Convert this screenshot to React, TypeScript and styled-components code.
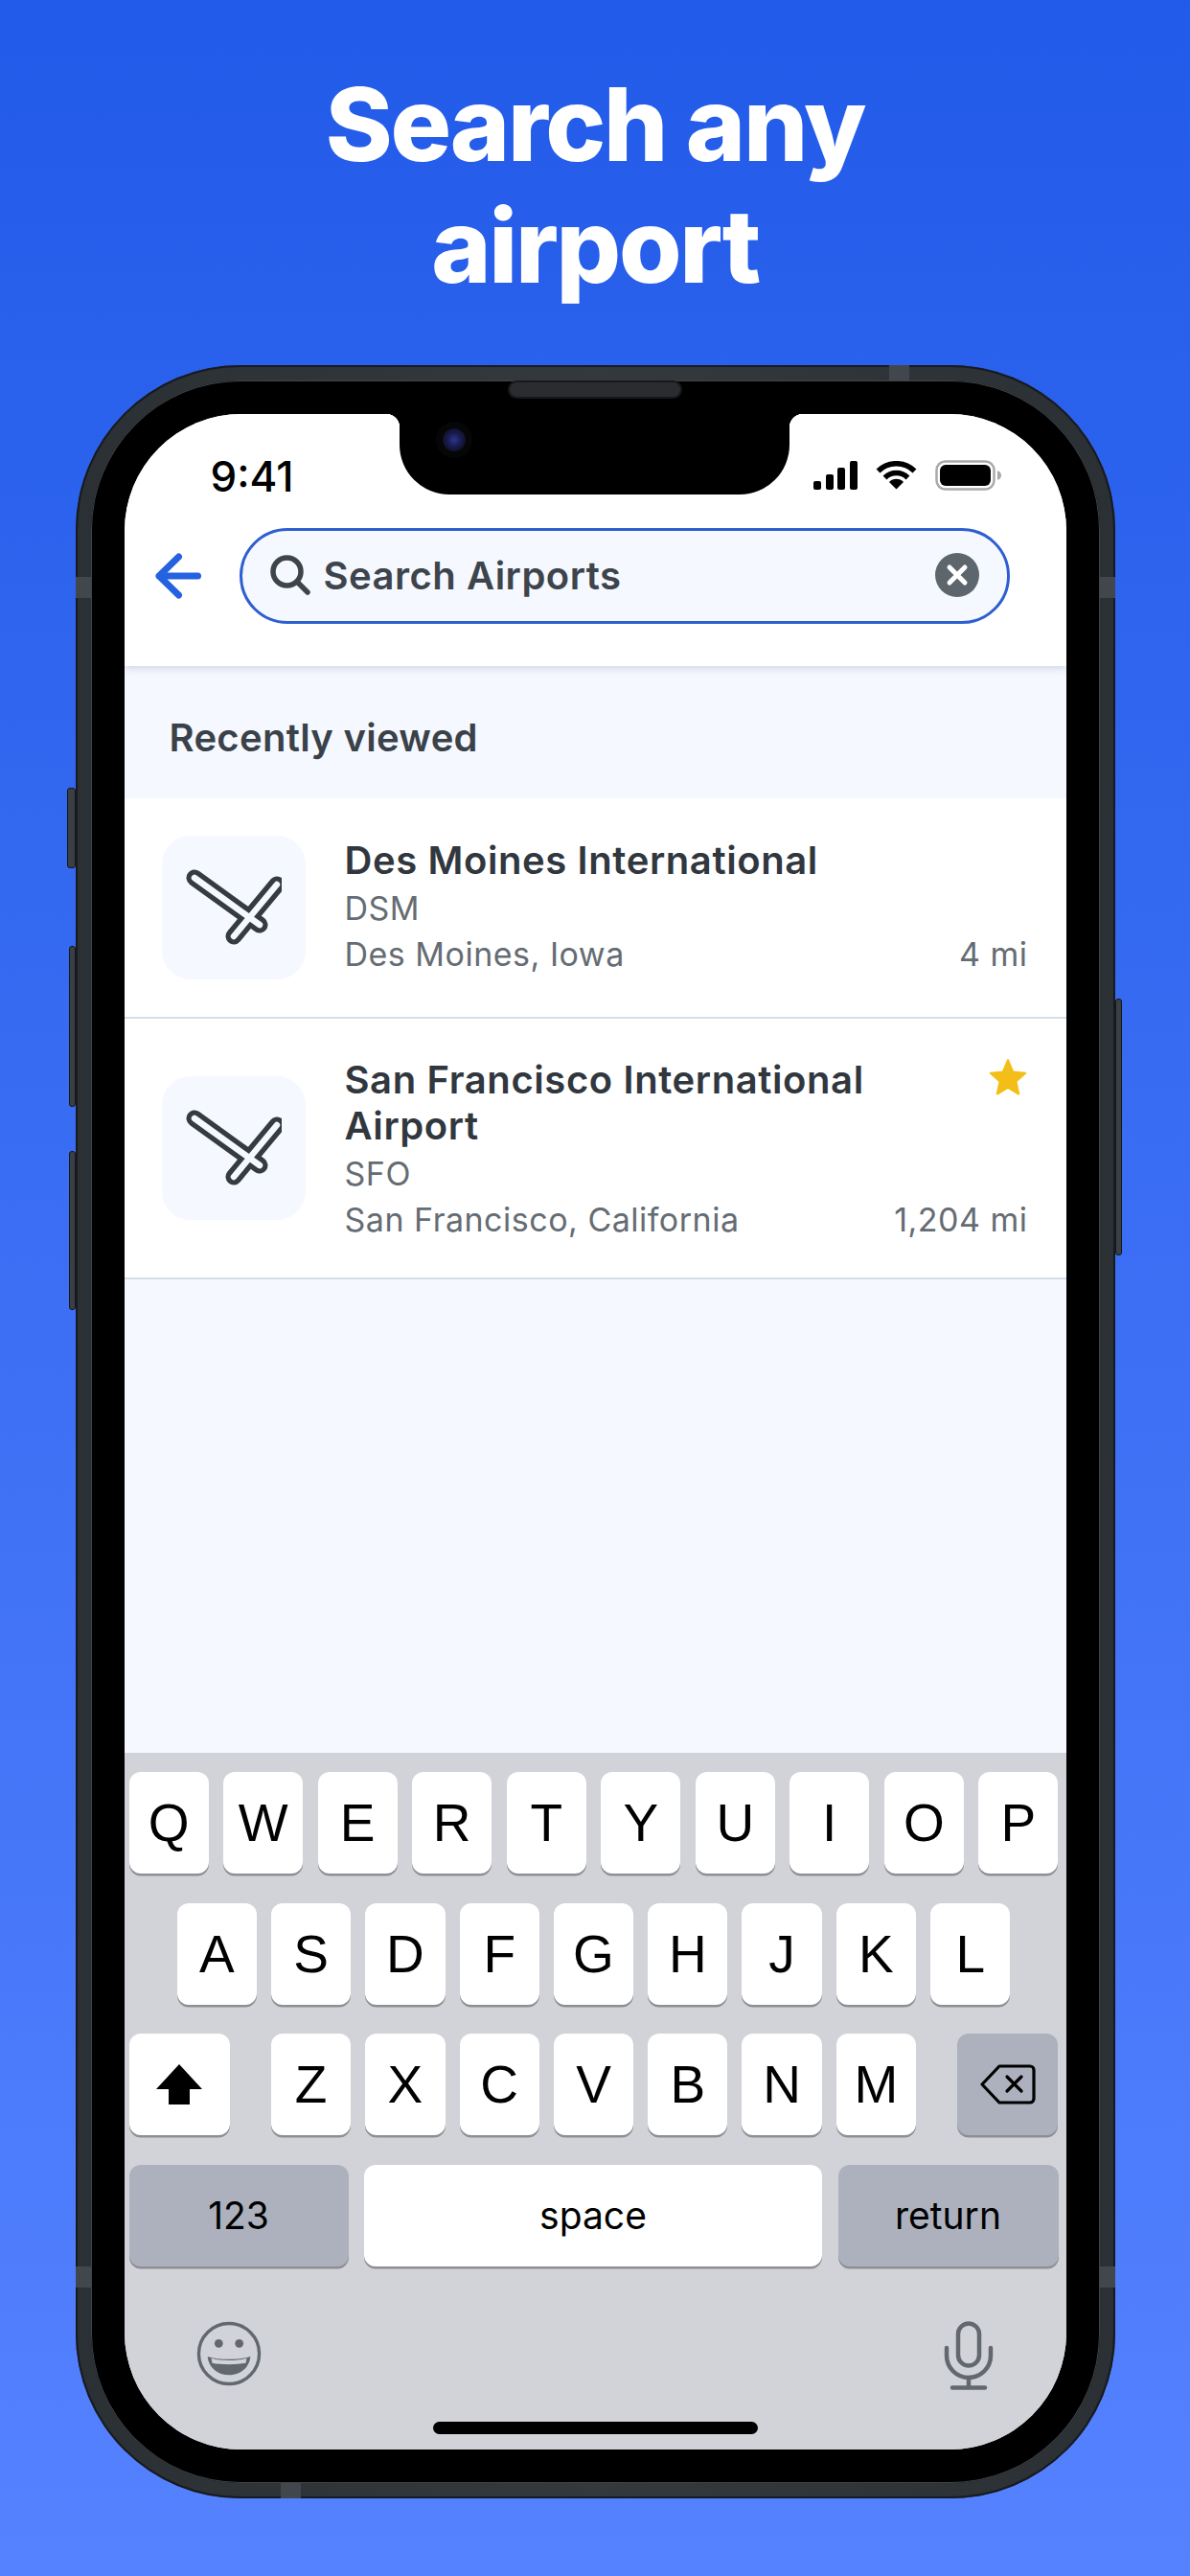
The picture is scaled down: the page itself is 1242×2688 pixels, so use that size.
import React from "react";
import styled, { createGlobalStyle } from "styled-components";

const GlobalStyle = createGlobalStyle`
    * { box-sizing: border-box; }
    html, body {
        margin: 0;
        padding: 0;
        width: 1242px;
        height: 2688px;
        overflow: hidden;
    }
`;

const Page = styled.div`
    width: 1242px;
    height: 2688px;
    background: linear-gradient(180deg, #225be9 0%, #5582ff 100%);
    display: flex;
    flex-direction: column;
    align-items: center;
    padding-top: 66px;
    font-family: Inter, "Liberation Sans", sans-serif;
`;

const Title = styled.h1`
    margin: 0 0 61px;
    color: #fff;
    font-size: 106px;
    line-height: 127px;
    font-weight: 800;
    letter-spacing: -2.3px;
    text-align: center;
`;

const Phone = styled.div`
    position: relative;
    width: 1085px;
    height: 2226px;
    padding: 16px;
    border-radius: 172px;
    background: linear-gradient(90deg, #2b3034, #34393d 50%, #2b3034);
    box-shadow: inset 0 0 0 2px #171a20;
`;

const SideButton = styled.div<{ $side: "left" | "right"; $top: number; $height: number; $w: number }>`
    position: absolute;
    top: ${(p) => p.$top}px;
    height: ${(p) => p.$height}px;
    width: ${(p) => p.$w}px;
    ${(p) => (p.$side === "left" ? `left: -${p.$w}px;` : `right: -${p.$w}px;`)}
    background: #3a3f43;
    border: 1px solid #14171b;
    border-radius: 3px;
`;

const Band = styled.div<{ $pos: string }>`
    position: absolute;
    background: #41474d;
    ${(p) => p.$pos}
`;

const Bezel = styled.div`
    position: relative;
    width: 100%;
    height: 100%;
    padding: 35px;
    background: #000;
    border-radius: 156px;
    box-shadow: inset 0 0 0 1px #3f4449;
`;

const Screen = styled.div`
    position: relative;
    width: 100%;
    height: 100%;
    border-radius: 122px;
    overflow: hidden;
    background: #f5f8fe;
    display: flex;
    flex-direction: column;
`;

const Notch = styled.div`
    position: absolute;
    top: 0;
    left: 287px;
    width: 407px;
    height: 84px;
    background: #000;
    border-radius: 0 0 52px 52px;
    z-index: 3;
    &::before, &::after {
        content: "";
        position: absolute;
        top: 0;
        width: 14px;
        height: 14px;
    }
    &::before {
        left: -14px;
        background: radial-gradient(circle at 0 100%, transparent 14px, #000 14.5px);
    }
    &::after {
        right: -14px;
        background: radial-gradient(circle at 100% 100%, transparent 14px, #000 14.5px);
    }
`;

const Camera = styled.div`
    position: absolute;
    top: 15px;
    left: 45px;
    width: 24px;
    height: 24px;
    border-radius: 50%;
    background: radial-gradient(circle, #2c3590 0%, #171a48 45%, #08080f 100%);
    box-shadow: 0 0 0 7px #060609;
`;

const Speaker = styled.div`
    position: absolute;
    top: 2px;
    left: 437px;
    width: 178px;
    height: 15px;
    border-radius: 8px;
    background: #2a2c2f;
    box-shadow: 0 0 0 2px #16181b;
    z-index: 1;
`;

const Header = styled.header`
    background: #fff;
    box-shadow: 0 2px 8px rgba(60, 80, 130, 0.22);
    position: relative;
    z-index: 1;
    padding-bottom: 44px;
`;

const StatusBar = styled.div`
    height: 119px;
    padding: 45px 67px 0 90px;
    display: flex;
    justify-content: space-between;
    align-items: flex-start;
`;

const Time = styled.span`
    font-size: 44px;
    line-height: 40px;
    font-weight: 500;
    color: #000;
`;

const StatusIcons = styled.div`
    display: flex;
    align-items: center;
    gap: 19px;
    height: 36px;
    margin-top: 1px;
`;

const SearchRow = styled.div`
    display: flex;
    align-items: center;
    padding-left: 32px;
    gap: 40px;
`;

const BackButton = styled.div`
    width: 48px;
    height: 48px;
    display: flex;
`;

const SearchBox = styled.div`
    width: 804px;
    height: 100px;
    border: 3px solid #2d5fd0;
    border-radius: 50px;
    background: #f5f8fe;
    display: flex;
    align-items: center;
    padding: 0 29px 2px;
`;

const SearchText = styled.span`
    flex: 1;
    margin-left: 14px;
    font-size: 40px;
    letter-spacing: 0.5px;
    font-weight: 600;
    color: #3d444c;
`;

const SectionHead = styled.div`
    height: 138px;
    padding: 10px 0 0 47px;
    display: flex;
    align-items: center;
    font-size: 40px;
    letter-spacing: 0.3px;
    font-weight: 600;
    color: #3a4149;
`;

const Row = styled.div<{ $h: number }>`
    height: ${(p) => p.$h}px;
    background: #fff;
    border-bottom: 2px solid #d5dfe8;
    display: flex;
    align-items: center;
    padding: 0 40px 0 39px;
    gap: 41px;
`;

const Tile = styled.div`
    width: 150px;
    height: 150px;
    flex-shrink: 0;
    border-radius: 30px;
    background: #f5f8fe;
    display: flex;
    align-items: center;
    justify-content: center;
`;

const Info = styled.div<{ $pt?: number }>`
    flex: 1;
    min-width: 0;
    padding-top: ${(p) => p.$pt ?? 0}px;
`;

const NameRow = styled.div`
    display: flex;
    justify-content: space-between;
    align-items: flex-start;
    margin-bottom: 2px;
`;

const Name = styled.div`
    font-size: 40px;
    letter-spacing: 0.6px;
    line-height: 48px;
    font-weight: 600;
    color: #31373e;
    width: 590px;
`;

const Code = styled.div`
    font-size: 34px;
    letter-spacing: 0.5px;
    line-height: 48px;
    color: #656c73;
`;

const Place = styled.div`
    display: flex;
    justify-content: space-between;
    font-size: 34px;
    letter-spacing: 0.5px;
    line-height: 48px;
    color: #656c73;
`;

const Keyboard = styled.div`
    margin-top: auto;
    height: 727px;
    background: #d1d3d9;
    padding: 20px 8px 0 5px;
    display: flex;
    flex-direction: column;
    position: relative;
`;

const KeyRow = styled.div<{ $gap?: number; $center?: boolean }>`
    display: flex;
    justify-content: ${(p) => (p.$center ? "center" : "space-between")};
    gap: ${(p) => p.$gap ?? 15}px;
    margin-bottom: 30.5px;
    height: 106px;
`;

const Key = styled.div<{ $dark?: boolean; $w?: number; $small?: boolean }>`
    width: ${(p) => p.$w ?? 83.3}px;
    height: 106px;
    border-radius: 12px;
    background: ${(p) => (p.$dark ? "#acb1bd" : "#fff")};
    box-shadow: 0 2.5px 0 #8d8f94;
    display: flex;
    align-items: center;
    justify-content: center;
    color: #000;
    font-family: ${(p) => (p.$small ? "Inter" : '"Liberation Sans"')}, sans-serif;
    font-size: ${(p) => (p.$small ? 39 : 55)}px;
    font-weight: 400;
    flex-shrink: 0;
`;

const Letters = styled.div`
    display: flex;
    gap: 15px;
`;

const KeyboardFoot = styled.div`
    display: flex;
    justify-content: space-between;
    align-items: flex-start;
    padding: 27px 68px 0 70px;
`;

const HomeBar = styled.div`
    position: absolute;
    left: 322px;
    bottom: 16px;
    width: 339px;
    height: 13px;
    border-radius: 7px;
    background: #000;
`;

const RunwayIcon = () => (
    <svg width={100} height={100} viewBox="0 0 100 100" fill="none" strokeLinecap="round">
        <g stroke="#353b42" strokeWidth={17}>
            <path d="M9 19 L77 68" />
            <path d="M95 26 L50 80" />
        </g>
        <g stroke="#f5f8fe" strokeWidth={6.5}>
            <path d="M9 19 L77 68" />
            <path d="M95 26 L50 80" />
        </g>
    </svg>
);

const Star = () => (
    <svg width={42} height={42} viewBox="0 0 24 24" fill="#f3be18" stroke="#f3be18" strokeWidth={1.2} strokeLinejoin="round">
        <path d="M12 1.8 15 8.9 22.4 9.6 16.8 14.6 18.4 22 12 18.2 5.6 22 7.2 14.6 1.6 9.6 9 8.9Z" />
    </svg>
);

const letterKeys = (s: string) => s.split("").map((c) => <Key key={c}>{c}</Key>);

const App = () => {
    return (
        <Page>
            <GlobalStyle />
            <Title>
                Search any
                <br />
                airport
            </Title>
            <Phone>
                <SideButton $side="left" $top={441} $height={84} $w={9} />
                <SideButton $side="left" $top={606} $height={168} $w={7} />
                <SideButton $side="left" $top={820} $height={166} $w={7} />
                <SideButton $side="right" $top={661} $height={268} $w={7} />
                <Band $pos="left: 0; top: 221px; width: 17px; height: 22px;" />
                <Band $pos="right: 0; top: 221px; width: 17px; height: 22px;" />
                <Band $pos="left: 0; top: 1984px; width: 17px; height: 22px;" />
                <Band $pos="right: 0; top: 1984px; width: 17px; height: 22px;" />
                <Band $pos="top: 0; right: 215px; width: 21px; height: 16px;" />
                <Band $pos="bottom: 0; left: 214px; width: 21px; height: 16px;" />
                <Bezel>
                    <Speaker />
                    <Screen>
                        <Notch>
                            <Camera />
                        </Notch>
                        <Header>
                            <StatusBar>
                                <Time>9:41</Time>
                                <StatusIcons>
                                    <svg width={46} height={30} viewBox="0 0 46 30" fill="#000">
                                        <rect x={0} y={21} width={8} height={9} rx={2} />
                                        <rect x={13} y={14} width={8} height={16} rx={2} />
                                        <rect x={25} y={7} width={8} height={23} rx={2} />
                                        <rect x={38} y={0} width={8} height={30} rx={2} />
                                    </svg>
                                    <svg width={43} height={30} viewBox="0 0 43 30" fill="none" stroke="#000" strokeWidth={5.5}>
                                        <path d="M2.5 10.5 A27 27 0 0 1 40.5 10.5" />
                                        <path d="M9.5 17.5 A17 17 0 0 1 33.5 17.5" />
                                        <path d="M21.5 29.5 L14 22 A10.5 10.5 0 0 1 29 22 Z" fill="#000" stroke="none" />
                                    </svg>
                                    <svg width={70} height={32} viewBox="0 0 70 32" fill="none">
                                        <rect x={1.5} y={1.5} width={60} height={29} rx={9} stroke="#a9a9a9" strokeWidth={2.5} />
                                        <rect x={5} y={5} width={53} height={22} rx={6} fill="#000" />
                                        <path d="M65 11 C68 12 69 14 69 16 C69 18 68 20 65 21 Z" fill="#a9a9a9" />
                                    </svg>
                                </StatusIcons>
                            </StatusBar>
                            <SearchRow>
                                <BackButton>
                                    <svg width={48} height={48} viewBox="0 0 48 48" fill="none" stroke="#2562e0" strokeWidth={7} strokeLinecap="round" strokeLinejoin="round">
                                        <path d="M44.5 24 H4 M24.5 4 L4 24 L24.5 44" />
                                    </svg>
                                </BackButton>
                                <SearchBox>
                                    <svg width={42} height={42} viewBox="0 0 42 42" fill="none" stroke="#3d444c" strokeWidth={5.5} strokeLinecap="round">
                                        <circle cx={17.5} cy={17.5} r={14.5} />
                                        <path d="M28 28 L39 39" />
                                    </svg>
                                    <SearchText>Search Airports</SearchText>
                                    <svg width={46} height={46} viewBox="0 0 46 46">
                                        <circle cx={23} cy={23} r={23} fill="#5d656d" />
                                        <path d="M15 15 L31 31 M31 15 L15 31" stroke="#fff" strokeWidth={5} strokeLinecap="round" />
                                    </svg>
                                </SearchBox>
                            </SearchRow>
                        </Header>
                        <SectionHead>Recently viewed</SectionHead>
                        <Row $h={230}>
                            <Tile>
                                <RunwayIcon />
                            </Tile>
                            <Info>
                                <NameRow>
                                    <Name>Des Moines International</Name>
                                </NameRow>
                                <Code>DSM</Code>
                                <Place>
                                    <span>Des Moines, Iowa</span>
                                    <span>4 mi</span>
                                </Place>
                            </Info>
                        </Row>
                        <Row $h={272}>
                            <Tile>
                                <RunwayIcon />
                            </Tile>
                            <Info $pt={3}>
                                <NameRow>
                                    <Name>San Francisco International Airport</Name>
                                    <Star />
                                </NameRow>
                                <Code>SFO</Code>
                                <Place>
                                    <span>San Francisco, California</span>
                                    <span>1,204 mi</span>
                                </Place>
                            </Info>
                        </Row>
                        <Keyboard>
                            <KeyRow>{letterKeys("QWERTYUIOP")}</KeyRow>
                            <KeyRow $center>{letterKeys("ASDFGHJKL")}</KeyRow>
                            <KeyRow>
                                <Key $w={105}>
                                    <svg width={48} height={42} viewBox="0 0 48 42" fill="#000">
                                        <path d="M24 0 L48 26 H35 V42 H13 V26 H0 Z" />
                                    </svg>
                                </Key>
                                <Letters>{letterKeys("ZXCVBNM")}</Letters>
                                <Key $w={105} $dark>
                                    <svg width={58} height={42} viewBox="0 0 58 42" fill="none" stroke="#000" strokeWidth={3.2} strokeLinejoin="round" strokeLinecap="round">
                                        <path d="M2 21 L20 2 H52 A4 4 0 0 1 56 6 V36 A4 4 0 0 1 52 40 H20 Z" />
                                        <path d="M28 13 L43 28 M43 13 L28 28" />
                                    </svg>
                                </Key>
                            </KeyRow>
                            <KeyRow $gap={16}>
                                <Key $w={229} $dark $small>123</Key>
                                <Key $w={478} $small>space</Key>
                                <Key $w={230} $dark $small>return</Key>
                            </KeyRow>
                            <KeyboardFoot>
                                <svg width={68} height={68} viewBox="0 0 70 70" fill="none">
                                    <circle cx={35} cy={35} r={32.5} stroke="#63686f" strokeWidth={3.5} />
                                    <circle cx={24} cy={24} r={4.5} fill="#63686f" />
                                    <circle cx={46} cy={24} r={4.5} fill="#63686f" />
                                    <path d="M12 38 C24 42 46 42 58 38 C57 50 47 58 35 58 C23 58 13 50 12 38 Z" fill="#63686f" />
                                    <path d="M16 40 C26 43 44 43 54 40 L53 45 C44 47 26 47 17 45 Z" fill="#d1d3d9" />
                                </svg>
                                <svg width={52} height={72} viewBox="0 0 52 72" fill="none" stroke="#63686f" strokeWidth={4.5} strokeLinecap="round">
                                    <rect x={15} y={2.5} width={22} height={44} rx={11} />
                                    <path d="M3 28 V36 A23 23 0 0 0 49 36 V28" />
                                    <path d="M26 59 V69 M9 69.5 H43" strokeWidth={4.5} />
                                </svg>
                            </KeyboardFoot>
                            <HomeBar />
                        </Keyboard>
                    </Screen>
                </Bezel>
            </Phone>
        </Page>
    );
};

export default App;
